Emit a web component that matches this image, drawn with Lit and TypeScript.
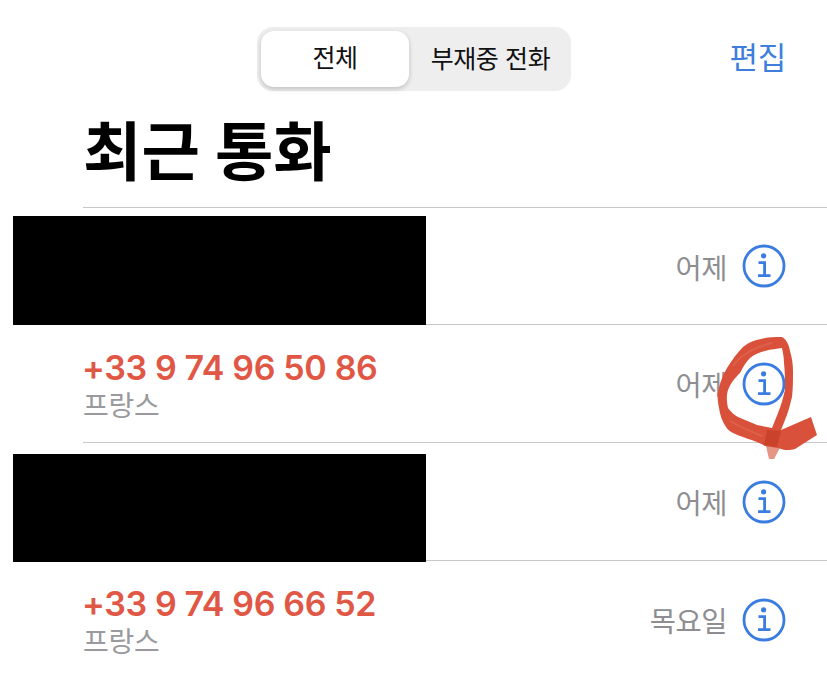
import { LitElement, html, css, svg } from "lit";
import { customElement } from "lit/decorators.js";

const rows = [
  { number: "", sub: "", day: "어제", hidden: true },
  { number: "+33 9 74 96 50 86", sub: "프랑스", day: "어제", hidden: false },
  { number: "", sub: "", day: "어제", hidden: true },
  { number: "+33 9 74 96 66 52", sub: "프랑스", day: "목요일", hidden: false },
];

const infoIcon = svg`<svg class="info" viewBox="0 0 44 44" width="44" height="44" fill="none">
  <circle cx="22" cy="22" r="20" stroke="#3a7ce0" stroke-width="2.8"/>
  <circle cx="21.6" cy="11.8" r="2.6" fill="#3a7ce0"/>
  <path d="M16.5 18.6H22.6V31.4M16 31.6H28.5" stroke="#3a7ce0" stroke-width="2.8"/>
</svg>`;

@customElement("app-root")
export class AppRoot extends LitElement {
  static styles = css`
    :host {
      display: block;
      position: relative;
      width: 827px;
      height: 675px;
      overflow: hidden;
      background: #fff;
      font-family: "Inter", "Noto Sans CJK KR", sans-serif;
    }
    .top {
      display: grid;
      grid-template-columns: 257px 314px 1fr;
      padding-top: 27px;
      height: 64px;
    }
    .segment {
      grid-column: 2;
      display: flex;
      align-items: center;
      height: 64px;
      box-sizing: border-box;
      padding: 4px;
      background: #eeeeef;
      border-radius: 16px;
    }
    .seg {
      font-size: 25px;
      color: #111;
      text-align: center;
      line-height: 54px;
      letter-spacing: -0.5px;
    }
    .seg.on {
      width: 148px;
      height: 56px;
      flex: none;
      background: #fff;
      border-radius: 13px;
      box-shadow: 0 2px 5px rgba(0, 0, 0, 0.2);
    }
    .seg.off {
      flex: 1;
      padding-left: 5px;
      letter-spacing: -0.4px;
    }
    .edit {
      grid-column: 3;
      font-size: 31px;
      color: #3f7fdb;
      text-align: right;
      padding-right: 41px;
      line-height: 62px;
      letter-spacing: -0.3px;
    }
    h1 {
      margin: 0;
      padding-left: 83px;
      height: 116px;
      box-sizing: border-box;
      font-size: 63.5px;
      font-weight: 700;
      line-height: 121px;
      color: #000;
    }
    .list {
      padding-left: 83px;
    }
    .row {
      height: 118px;
      box-sizing: border-box;
      border-top: 1px solid #c8c8ca;
      display: flex;
      align-items: center;
      padding-right: 41px;
    }
    .row:first-child {
      height: 117px;
    }
    .text {
      flex: 1;
      padding-top: 4px;
    }
    .number {
      font-size: 34px;
      font-weight: 600;
      line-height: 40px;
      color: #e05745;
      letter-spacing: -0.36px;
      margin-left: -1px;
    }
    .sub {
      font-size: 28px;
      line-height: 36px;
      color: #9a9a9e;
      letter-spacing: -0.3px;
    }
    .day {
      font-size: 28.5px;
      color: #8e8e92;
      margin-right: 15px;
      letter-spacing: -0.5px;
    }
    .info {
      display: block;
      flex: none;
    }
    .redact {
      position: absolute;
      left: 13px;
      width: 413px;
      background: #000;
    }
    .r1 { top: 216px; height: 109px; }
    .r2 { top: 454px; height: 108px; }
    .scribble {
      position: absolute;
      left: 0;
      top: 0;
      pointer-events: none;
    }
  `;

  render() {
    return html`
      <div class="top">
        <div class="segment">
          <div class="seg on">전체</div>
          <div class="seg off">부재중 전화</div>
        </div>
        <div class="edit">편집</div>
      </div>
      <h1>최근 통화</h1>
      <div class="list">
        ${rows.map(
          (r) => html`<div class="row">
            <div class="text">
              ${r.hidden
                ? ""
                : html`<div class="number">${r.number}</div>
                    <div class="sub">${r.sub}</div>`}
            </div>
            <div class="day">${r.day}</div>
            ${infoIcon}
          </div>`
        )}
      </div>
      <div class="redact r1"></div>
      <div class="redact r2"></div>
      <svg class="scribble" width="827" height="675" viewBox="0 0 827 675" fill="none">
        <defs>
          <filter id="soft" x="-10%" y="-10%" width="120%" height="120%">
            <feGaussianBlur stdDeviation="0.7" />
          </filter>
        </defs>
        <g filter="url(#soft)">
          <path d="M766 446L781 446L774 459L769 459Z" fill="#e59584" />
          <path
            fill-rule="evenodd"
            fill="#d9513a"
            d="M811 417L817 435L795 449C788 451 783 450 778 448L765 446C757 441 750 440 743 437C735 434 729 432 726 427C722 421 720 415 719 408C718 402 717 397 718 392C720 382 723 375 727 368C732 360 737 353 743 347C749 342 755 340 761 339C768 337 775 337 782 337C787 340 789 345 790 351C792 358 793 364 793 371C793 380 793 389 792 397C790 405 788 413 785 420L781 430Z
               M728 408C727 403 726 397 728 390C731 382 735 378 740 373C743 367 746 362 750 358C755 354 760 352 765 351C771 349 777 349 782 348C783 353 784 358 784 363C785 372 785 381 785 390C783 398 781 406 778 413C776 418 774 423 772 428C767 427 762 426 757 425C751 422 744 420 738 417C734 415 731 412 728 408Z"
          />
          <path d="M767 430L781 431L777 447L764 445Z" fill="#cb4229" />
          <path d="M730 421C738 426 750 431 762 436M733 366C741 355 752 348 772 343" stroke="#e6806c" stroke-width="2" opacity="0.35" />
        </g>
      </svg>
    `;
  }
}
